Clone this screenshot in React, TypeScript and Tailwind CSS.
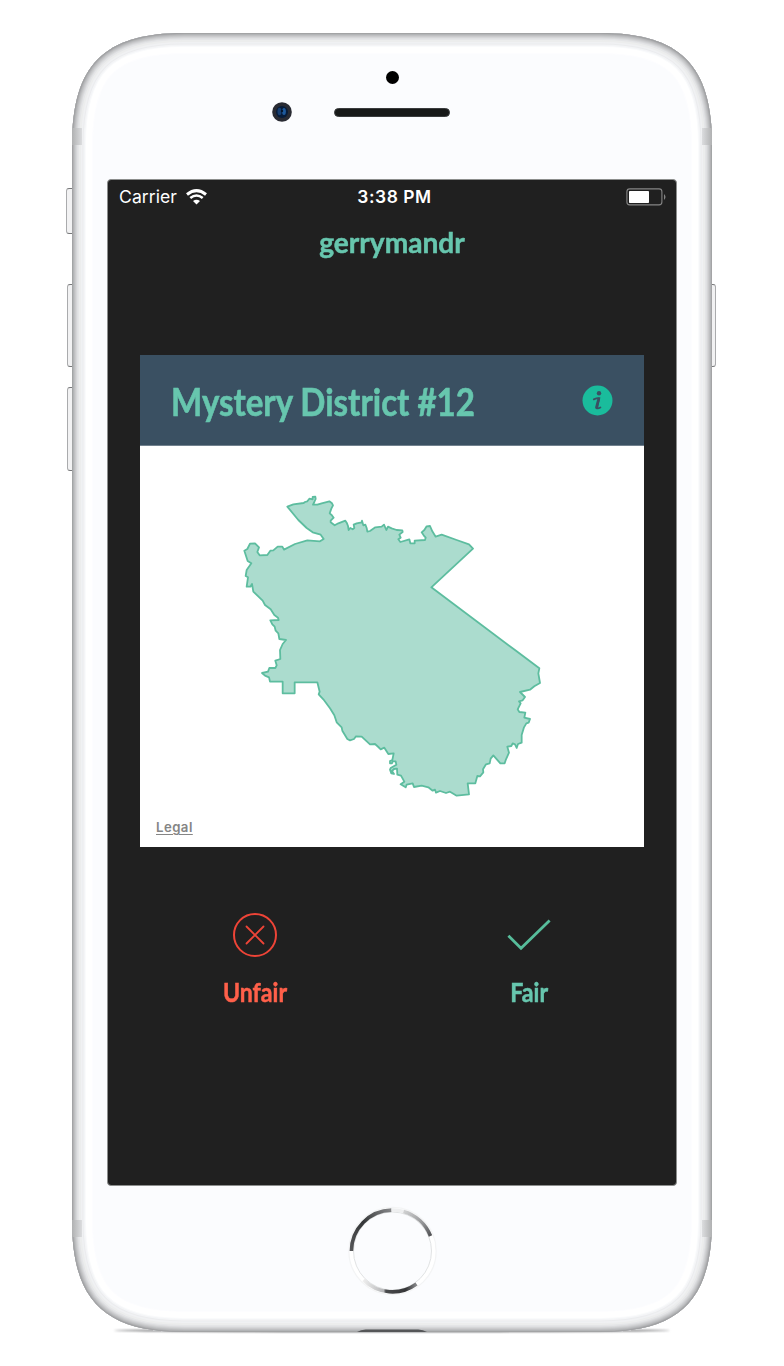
import React from 'react';

const DISTRICT =
  'M172,80 190,73 221,69 225,66 232,64 238,56 248,58 248,51 256,50 257,57 253,66 249,74 262,74 275,70 298,64 306,70 309,76 304,86 299,100 305,105 311,113 302,122 302,127 314,136 325,130 346,122 351,130 354,138 356,150 361,144 368,148 373,144 371,134 380,130 395,127 396,122 400,136 406,134 410,144 412,155 420,153 436,142 455,140 462,134 469,150 474,140 485,145 500,150 517,151 518,156 508,164 512,173 505,178 511,186 538,178 541,190 554,190 554,182 585,180 587,173 581,166 575,157 583,150 590,139 600,138 607,154 617,170 635,164 680,180 717,193 729,206 604,322 855,510 928,565 925,580 930,609 913,619 900,629 870,636 885,651 878,661 867,664 872,670 863,688 868,696 886,698 883,713 900,717 896,728 889,730 882,742 875,765 875,788 864,792 860,804 855,793 848,790 844,798 832,800 837,818 828,838 824,850 811,850 790,826 782,836 779,850 768,853 759,868 760,877 750,889 742,888 736,910 713,910 717,943 680,947 660,935 648,939 630,933 618,938 615,929 608,932 595,922 575,917 552,921 548,910 530,914 527,922 512,913 523,905 513,887 502,884 501,866 492,867 486,873 492,882 484,880 480,869 482,864 499,854 497,844 488,844 486,850 480,850 480,843 487,840 491,820 475,822 463,803 452,808 445,801 435,792 420,793 395,770 378,769 372,777 360,781 352,777 337,752 335,742 320,727 313,706 300,685 280,658 266,643 269,635 262,607 194,607 194,640 158,640 158,605 120,605 117,592 105,587 96,579 114,575 118,564 136,564 140,556 136,542 151,537 150,510 158,492 168,480 148,477 145,460 137,452 134,440 127,433 121,421 146,420 144,413 133,405 122,388 105,375 98,362 70,335 66,312 61,320 50,320 54,292 47,288 50,270 64,250 53,243 43,212 52,207 60,191 75,190 87,202 82,216 89,226 112,225 121,212 130,211 143,200 157,200 162,209 195,192 232,181 270,184 281,177 272,164 248,157 230,144 205,120 172,80Z';

const SHELL =
  'M0 112C0 32 32 0 112 0H528C608 0 640 32 640 112V1187C640 1267 608 1299 528 1299H112C32 1299 0 1267 0 1187Z';

// Concentric edge bands of the metal shell, as [depth from the edge, colour].
const SHELL_BANDS: [number, string][] = [
  [21, '#fdfdff'],
  [20, '#ffffff'],
  [14, '#fafbfc'],
  [13, '#f4f5f7'],
  [11.5, '#ebecee'],
  [10.5, '#f0f1f3'],
  [9, '#eceded'],
  [7, '#e4e5e7'],
  [5.5, '#dadbdd'],
  [4.5, '#d0d1d3'],
  [3.5, '#c5c6c8'],
  [2.5, '#b9babc'],
  [1.5, '#acadaf'],
  [0.7, '#a0a1a3'],
];

function Shell() {
  return (
    <svg className="absolute inset-0" width="640" height="1299" viewBox="0 0 640 1299">
      <clipPath id="shellClip">
        <path d={SHELL} />
      </clipPath>
      <path d={SHELL} fill="#fbfcfe" />
      <g clipPath="url(#shellClip)" fill="none">
        {SHELL_BANDS.map(([depth, color]) => (
          <path key={depth} d={SHELL} stroke={color} strokeWidth={depth * 2} />
        ))}
      </g>
    </svg>
  );
}

function SideButton({ className }: { className: string }) {
  return (
    <span
      className={`absolute w-[7px] border-[1.5px] border-[#aaabad] border-t-[#77787a] border-b-[#77787a] bg-[#f2f2f3] ${className}`}
    />
  );
}

function AntennaBand({ className }: { className: string }) {
  return <span className={`absolute h-[17px] w-[10px] from-[#b0b1b2] to-[#dcdddf] ${className}`} />;
}

function StatusBar() {
  return (
    <div className="grid h-[34px] grid-cols-3 items-center pl-[11px] pr-[9px] font-['Inter','Roboto',sans-serif] text-[18px] text-white">
      <div className="flex items-center gap-[9px]">
        <span className="text-[17.6px] tracking-[0.05px]">Carrier</span>
        <svg width="21" height="16" viewBox="0 0 21 16" fill="none" stroke="#fff">
          <path d="M1 5.5Q10.5 -2.2 20 5.5" strokeWidth="3" />
          <path d="M4.3 9Q10.5 4 16.7 9" strokeWidth="2.6" />
          <path d="M7 12.1Q10.5 9.2 14 12.1L10.5 15.6Z" fill="#fff" stroke="none" />
        </svg>
      </div>
      <span className="whitespace-nowrap pl-[3px] text-center text-[17.4px] font-semibold tracking-[0.55px]">3:38 PM</span>
      <svg className="-mt-[1px] justify-self-end" width="41" height="18" viewBox="0 0 41 18">
        <rect x="0.9" y="0.9" width="35" height="16" rx="2.8" fill="none" stroke="#858585" strokeWidth="1.1" />
        <rect x="3" y="3" width="20" height="12" rx="0.8" fill="#fff" />
        <path d="M38 6Q41 9 38 12Z" fill="#858585" />
      </svg>
    </div>
  );
}

function DistrictCard() {
  return (
    <section className="mx-[32px] mt-[88px] h-[492px] bg-white">
      <header className="flex h-[91px] items-center justify-between border-b border-[#71818e] bg-[#3a5062] pl-[31px] pr-[31px]">
        <h2 className="origin-left scale-x-[0.87] whitespace-nowrap pt-[1px] text-[38px] font-bold leading-none text-[#67c6ae] [-webkit-text-stroke:0.6px_#67c6ae]">
          Mystery District #12
        </h2>
        <svg width="31" height="31" viewBox="0 0 31 31">
          <circle cx="15.5" cy="15.5" r="15" fill="#1abc9c" />
          <circle cx="17" cy="8.2" r="2.2" fill="#3a5062" />
          <path
            d="M11.8 14.3Q15.5 12.7 17.3 13.2Q15.6 19 15.1 22.5Q15 24.2 18.4 22.5"
            fill="none"
            stroke="#3a5062"
            strokeWidth="1.8"
            strokeLinecap="round"
          />
          <path d="M16.7 14L14.5 22.7" stroke="#3a5062" strokeWidth="2.8" strokeLinecap="round" />
        </svg>
      </header>
      <div className="relative h-[401px]">
        <svg className="block" width="504" height="401" viewBox="-270 -102 1512 1203">
          <path d={DISTRICT} fill="#abdcce" stroke="#5dbd9f" strokeWidth="5.4" strokeLinejoin="round" />
        </svg>
        <a className="absolute bottom-[12px] left-[16px] font-['Inter',sans-serif] text-[13.2px] font-semibold leading-[16px] tracking-[0.45px] text-[#858585] underline underline-offset-[2px]">
          Legal
        </a>
      </div>
    </section>
  );
}

function Verdicts() {
  return (
    <div className="grid grid-cols-2 px-[10px] pt-[65px] text-[26px] font-bold leading-[30px]">
      <button className="flex flex-col items-center gap-[19px] text-[#ff604a]">
        <svg width="46" height="46" viewBox="0 0 46 46" fill="none" stroke="#ee4437">
          <circle cx="23" cy="23" r="21" strokeWidth="2" />
          <path d="M14.5 14.5L31.5 31.5M31.5 14.5L14.5 31.5" strokeWidth="1.8" strokeLinecap="round" />
        </svg>
        <span className="scale-x-[0.89] [-webkit-text-stroke:0.5px_#ff604a]">Unfair</span>
      </button>
      <button className="flex flex-col items-center gap-[19px] text-[#67c6ae]">
        <svg width="46" height="46" viewBox="0 0 46 46" fill="none" stroke="#57bd9b">
          <path d="M2.4 23.7L15 36.3L43.6 8.4" strokeWidth="2.8" />
        </svg>
        <span className="scale-x-[0.89] [-webkit-text-stroke:0.5px_#67c6ae]">Fair</span>
      </button>
    </div>
  );
}

function Screen() {
  return (
    <main className="mx-auto h-[1007px] w-[570px] rounded-[4px] border border-[#8c8e8d] bg-[#202020] font-['Lato',sans-serif]">
      <StatusBar />
      <h1 className="origin-center scale-x-[0.97] pt-[7px] pb-[4px] text-center text-[29px] font-bold leading-[42px] text-[#67c6ae] [-webkit-text-stroke:0.5px_#67c6ae]">
        gerrymandr
      </h1>
      <DistrictCard />
      <Verdicts />
    </main>
  );
}

function HomeButton() {
  return (
    <svg className="mx-auto mt-[20px] block" width="90" height="90" viewBox="0 0 90 90" fill="none">
      <defs>
        <linearGradient id="ringLeft" x1="0" y1="1" x2="1" y2="0">
          <stop offset="0" stopColor="#555658" />
          <stop offset="0.5" stopColor="#343638" />
          <stop offset="1" stopColor="#858688" />
        </linearGradient>
        <linearGradient id="ringRight" x1="0" y1="0" x2="1" y2="1">
          <stop offset="0" stopColor="#d0d1d2" />
          <stop offset="0.6" stopColor="#929395" />
          <stop offset="1" stopColor="#505154" />
        </linearGradient>
        <linearGradient id="ringBase" x1="0" y1="0" x2="1" y2="0">
          <stop offset="0" stopColor="#eeeeee" />
          <stop offset="0.38" stopColor="#b5b6b8" />
          <stop offset="0.42" stopColor="#4a4b4d" />
          <stop offset="0.8" stopColor="#353638" />
          <stop offset="1" stopColor="#88898b" />
        </linearGradient>
      </defs>
      <circle cx="45.5" cy="45" r="43.5" stroke="#f3f4f5" strokeWidth="1.5" />
      <circle cx="45.5" cy="45" r="41" stroke="#fff" strokeWidth="4" />
      <circle cx="45.5" cy="45" r="39" stroke="#e1e3e4" strokeWidth="1" />
      <path d="M4.4 45A41 41 0 0 1 44.5 4.1" stroke="url(#ringLeft)" strokeWidth="3.6" />
      <path d="M44.5 4A41 41 0 0 1 56.5 5.5" stroke="#eeeff0" strokeWidth="3.5" />
      <path d="M56.5 5.5A41 41 0 0 1 83.5 30" stroke="url(#ringRight)" strokeWidth="3.6" />
      <path d="M16.5 74A41 41 0 0 0 69.5 78" stroke="url(#ringBase)" strokeWidth="3.6" />
    </svg>
  );
}

export default function App() {
  return (
    <div className="h-[1366px] w-[784px] overflow-hidden bg-white pt-[33px]">
      <div className="relative mx-auto h-[1299px] w-[640px]">
        <SideButton className="-left-[6px] top-[155px] h-[46px] rounded-l-[3px]" />
        <SideButton className="-left-[5px] top-[251px] h-[83px] rounded-l-[3px]" />
        <SideButton className="-left-[5px] top-[354px] h-[84px] rounded-l-[3px]" />
        <SideButton className="-right-[4px] top-[251px] h-[83px] rounded-r-[3px]" />
        <span className="absolute bottom-0 left-[42px] h-[3px] w-[556px] rounded-[50%] bg-[#4c4d50] blur-[1px]" />
        <Shell />
        <div className="relative h-full w-full">
          <AntennaBand className="left-0 top-[95px] bg-linear-to-r" />
          <AntennaBand className="right-0 top-[95px] bg-linear-to-l" />
          <AntennaBand className="left-0 top-[1187px] bg-linear-to-r" />
          <AntennaBand className="right-0 top-[1187px] bg-linear-to-l" />
          <div className="flex h-[146px] flex-col items-center pt-[38px]">
            <span className="h-[13px] w-[13px] rounded-full bg-black" />
            <div className="mt-[18px] flex w-full items-center pl-[200px]">
              <svg width="20" height="20" viewBox="0 0 20 20">
                <circle cx="10" cy="10" r="9.8" fill="#292b33" />
                <circle cx="10" cy="10" r="6" fill="#071c3a" />
                <ellipse cx="7.5" cy="9.5" rx="2" ry="3.8" fill="#173f72" />
                <ellipse cx="12" cy="9.5" rx="1.9" ry="3.6" fill="#1d599c" />
                <circle cx="10" cy="9" r="1.2" fill="#06152b" />
              </svg>
              <span className="ml-[42px] h-[9px] w-[116px] rounded-full border border-[#3a3c3d] bg-[#171918]" />
            </div>
          </div>
          <Screen />
          <HomeButton />
          <svg className="absolute bottom-0 left-[285px]" width="70" height="3" viewBox="0 0 72 3" preserveAspectRatio="none">
            <path d="M0 3Q4 0.5 9 0.5H63Q68 0.5 72 3Z" fill="#555658" />
          </svg>
        </div>
      </div>
    </div>
  );
}
